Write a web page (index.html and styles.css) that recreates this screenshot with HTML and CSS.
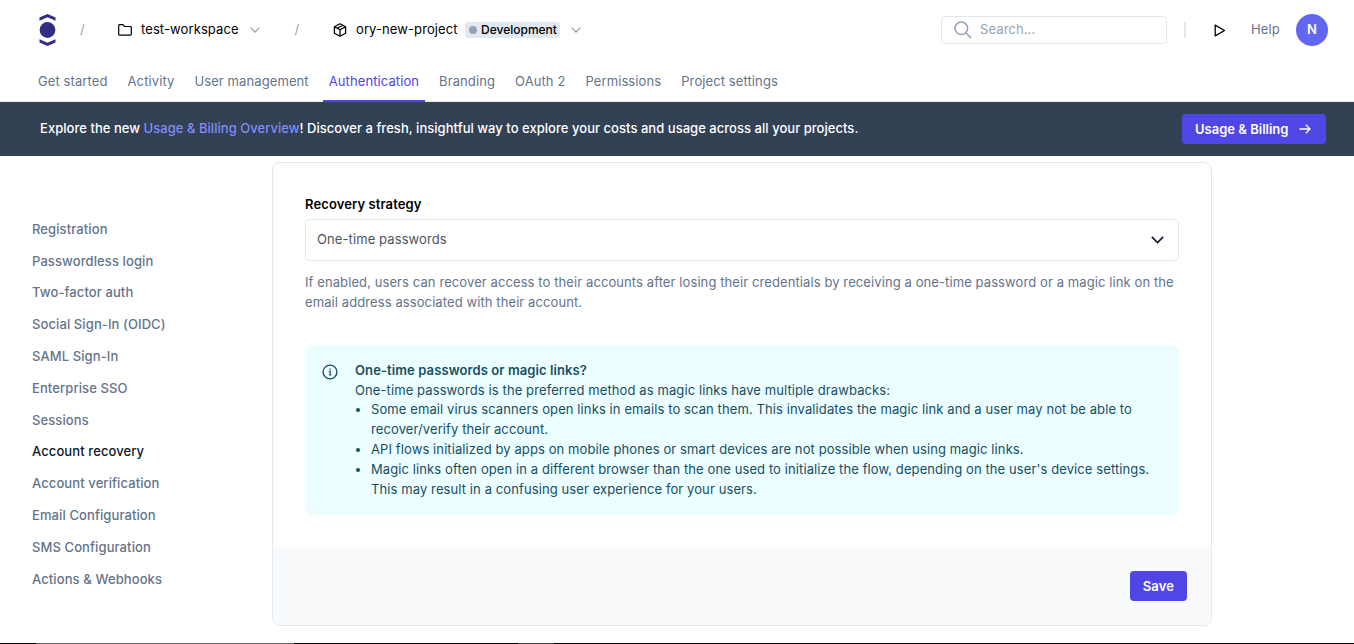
FILE: index.html
```html
<!DOCTYPE html>
<html lang="en">
<head>
<meta charset="utf-8">
<title>Account recovery</title>
<link rel="stylesheet" href="styles.css">
</head>
<body>
<header class="header">
  <div class="topbar">
    <svg class="logo" width="17" height="32" viewBox="0 0 17 32" fill="#312e81"><circle cx="8.5" cy="16" r="7.9"/><path d="M.5 3.500 8.500 0l8 3.500v3.200l-8-3.500-8 3.500z"/><path d="M.5 28.500l8 3.500 8-3.500v-3.200l-8 3.500-8-3.500z"/></svg>
    <span class="slash slash-first">/</span>
    <svg class="folder" width="14" height="12" viewBox="0 0 14 12" fill="none" stroke="#000" stroke-width="1.200"><path d="M.7 10V1.500q0-.8.8-.8h3.300l1.700 1.800h6q.8 0 .8.800V10.300q0 .8-.8.800H1.500q-.8 0-.8-.8z"/></svg>
    <span class="crumb workspace">test-workspace</span>
    <svg class="chevron" width="10" height="6" viewBox="0 0 10 6" fill="none" stroke="#94a3b8" stroke-width="1.300"><path d="M.6.6 5 5 9.400.6"/></svg>
    <span class="slash slash-second">/</span>
    <svg class="cube" width="14" height="14" viewBox="0 0 14 14" fill="none" stroke="#000" stroke-width="1.300" stroke-linejoin="round"><path d="M7 .8 12.600 3.800v6.400L7 13.200 1.400 10.200V3.800zM1.400 3.800 7 6.800l5.600-3M7 6.800v6.400M4.200 5.200l5.600-3"/></svg>
    <span class="crumb project">ory-new-project</span>
    <span class="badge"><i class="dot"></i>Development</span>
    <svg class="chevron" width="10" height="6" viewBox="0 0 10 6" fill="none" stroke="#94a3b8" stroke-width="1.300"><path d="M.6.6 5 5 9.400.6"/></svg>
    <div class="search">
      <svg width="18" height="18" viewBox="0 0 18 18" fill="none" stroke="#94a3b8" stroke-width="1.500"><circle cx="7.300" cy="7.300" r="6.300"/><path d="m11.800 11.800 5.200 5.200"/></svg>
      <span>Search...</span>
    </div>
    <span class="divider"></span>
    <svg class="play" width="12" height="13" viewBox="0 0 12 13" fill="none" stroke="#000" stroke-width="1.300" stroke-linejoin="round"><path d="M1.200 1.100v10.800l9.300-5.400z"/></svg>
    <span class="help">Help</span>
    <span class="avatar">N</span>
  </div>
  <nav class="tabs">
    <a class="tab">Get started</a><a class="tab">Activity</a><a class="tab">User management</a><a class="tab tab-active">Authentication</a><a class="tab">Branding</a><a class="tab">OAuth 2</a><a class="tab">Permissions</a><a class="tab">Project settings</a>
  </nav>
</header>
<section class="banner">
  <p class="banner-text">Explore the new <a class="banner-link">Usage &amp; Billing Overview</a>! Discover a fresh, insightful way to explore your costs and usage across all your projects.</p>
  <button class="button banner-button">Usage &amp; Billing<svg width="12" height="10" viewBox="0 0 12 10" fill="none" stroke="#fff" stroke-width="1.300"><path d="M.5 5h10.500M6.800.8 11 5 6.800 9.200"/></svg></button>
</section>
<div class="content">
  <nav class="sidebar">
    <a>Registration</a><a>Passwordless login</a><a>Two-factor auth</a><a>Social Sign-In (OIDC)</a><a>SAML Sign-In</a><a>Enterprise SSO</a><a>Sessions</a><a class="current">Account recovery</a><a>Account verification</a><a>Email Configuration</a><a>SMS Configuration</a><a>Actions &amp; Webhooks</a>
  </nav>
  <main class="card">
    <div class="card-body">
      <label class="label">Recovery strategy</label>
      <div class="select"><span>One-time passwords</span><svg width="13" height="8" viewBox="0 0 13 8" fill="none" stroke="#0f172a" stroke-width="1.600"><path d="M.8.9 6.500 6.600 12.200.9"/></svg></div>
      <p class="hint">If enabled, users can recover access to their accounts after losing their credentials by receiving a one-time password or a magic link on the<br>email address associated with their account.</p>
      <div class="info">
        <svg width="16" height="16" viewBox="0 0 16 16" fill="none" stroke="#164e63" stroke-width="1.400"><circle cx="8" cy="8" r="6.900"/><path d="M6.800 7.400H8.200v3.400M7 11h2.400M7.400 5.200h1.400" stroke-width="1.200"/></svg>
        <div class="info-text">
          <strong>One-time passwords or magic links?</strong>
          <p>One-time passwords is the preferred method as magic links have multiple drawbacks:</p>
          <ul>
            <li>Some email virus scanners open links in emails to scan them. This invalidates the magic link and a user may not be able to<br>recover/verify their account.</li>
            <li>API flows initialized by apps on mobile phones or smart devices are not possible when using magic links.</li>
            <li>Magic links often open in a different browser than the one used to initialize the flow, depending on the user's device settings.<br>This may result in a confusing user experience for your users.</li>
          </ul>
        </div>
      </div>
    </div>
    <footer class="card-footer"><button class="button">Save</button></footer>
  </main>
</div>
<div class="bottom-edge"></div>
</body>
</html>
```
FILE: styles.css
```css
* { box-sizing: border-box; }
body { margin: 0; height: 644px; overflow: hidden; display: flex; flex-direction: column; background: #fff; color: #000; font: 13px/19.8px Inter, sans-serif; white-space: nowrap; letter-spacing: 0.1px; }
p, ul { margin: 0; }
svg { display: block; flex: none; }
.header { height: 102px; flex: none; border-bottom: 1px solid #e2e8f0; }
.topbar { height: 60px; display: flex; align-items: center; padding: 0 26px 0 39px; }
.slash { color: #94a3b8; }
.slash-first { margin-left: 24px; width: 38px; }
.workspace { margin-left: 9px; width: 98px; }
.chevron { margin-left: 11px; }
.slash-second { margin-left: 34.500px; width: 38.500px; }
.project { margin-left: 9px; width: 101px; }
.badge { display: flex; align-items: center; gap: 4px; width: 95px; height: 16px; margin-left: 8px; padding-left: 4px; border-radius: 3px; background: #e2e8f0; font-size: 12px; font-weight: 500; letter-spacing: 0; }
.dot { flex: none; width: 8px; height: 8px; border-radius: 50%; background: #94a3b8; }
.search { display: flex; align-items: center; gap: 8px; width: 226px; height: 28px; margin-left: auto; padding-left: 12px; border: 1px solid #e2e8f0; border-radius: 4px; color: #94a3b8; }
.divider { width: 2px; height: 16px; margin-left: 17px; background: #e2e8f0; }
.play { margin-left: 28px; }
.help { margin-left: 25px; width: 30px; color: #64748b; }
.avatar { width: 32px; height: 32px; margin-left: 15px; border-radius: 50%; background: #6366f1; color: #fff; text-align: center; line-height: 31px; font-weight: 600; }
.tabs { display: flex; gap: 8px; height: 42px; padding-left: 32px; color: #64748b; }
.tab { padding: 12px 6px 0; }
.tab-active { color: #4f46e5; border-bottom: 2px solid #4f46e5; }
.banner { height: 54px; flex: none; display: flex; align-items: center; justify-content: space-between; padding: 0 28px 0 40px; background: #334155; color: #fff; font-weight: 500; letter-spacing: 0.036px; }
.banner-link { color: #818cf8; }
.button { display: flex; align-items: center; height: 30px; padding: 0 13px; border: 0; border-radius: 4px; background: #4f46e5; color: #fff; font: 600 13px/20px Inter, sans-serif; letter-spacing: 0.1px; }
.banner-button { justify-content: space-between; width: 144px; padding-right: 15px; letter-spacing: 0; }
.content { display: flex; flex: 1; }
.sidebar { width: 272px; padding: 57.800px 0 0 32px; color: #64748b; font-weight: 500; }
.sidebar a { display: block; height: 31.800px; line-height: 31.800px; }
.sidebar .current { color: #0f172a; }
.card { width: 940px; height: 464px; margin-top: 6px; border: 1px solid #e2e8f0; border-radius: 8px; overflow: hidden; }
.card-body { height: 384px; padding: 32px 32px 0; }
.label { display: block; font-weight: 600; }
.select { display: flex; align-items: center; justify-content: space-between; height: 42px; margin-top: 4.200px; padding: 0 14px 0 11px; border: 1px solid #e2e8f0; border-radius: 4px; color: #4b5563; }
.hint { margin-top: 11.800px; color: #64748b; letter-spacing: 0.095px; }
.info { display: flex; height: 170px; margin-top: 32.600px; padding: 15.900px 17px; gap: 17px; border-radius: 8px; background: #ecfeff; color: #164e63; }
.info svg { margin-top: 3.100px; }
.info strong { display: block; font-weight: 600; }
.info ul { padding-left: 16px; }
.card-footer { display: flex; justify-content: flex-end; height: 78px; padding: 24px 24px 0; background: #f8fafc; }
.bottom-edge { height: 1px; background: linear-gradient(90deg, #000 36px, #666 36px 294px, #000 294px 518px, #444 518px 554px, #000 554px); }
```
